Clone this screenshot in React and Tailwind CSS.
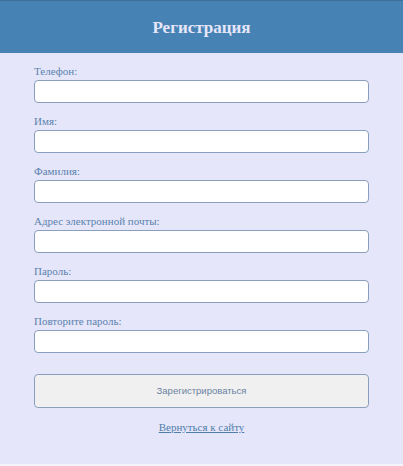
export default function App() {
  const fields = [
    "Телефон:",
    "Имя:",
    "Фамилия:",
    "Адрес электронной почты:",
    "Пароль:",
    "Повторите пароль:",
  ];
  return (
    <div className="w-[403px] h-[466px] bg-[#f4f4fb]" style={{ fontFamily: '"Liberation Serif", serif' }}>
      <div className="h-[464px] bg-[#e6e6fa] flex flex-col">
        <div className="h-px bg-[#3f6f98]" />
        <div className="h-[52px] bg-[#4682b4] flex items-center justify-center">
          <h1 className="text-[17px] font-bold text-[#e6e6fa] leading-none mt-[1px]">Регистрация</h1>
        </div>
        <div className="px-[34px] pt-[11px] flex flex-col">
          {fields.map((f, i) => (
            <div key={i} className="flex flex-col mb-[11px]">
              <label className="text-[11px] leading-[14px] text-[#5b82ad] mb-[2px]">{f}</label>
              <input className="h-[23px] w-full bg-white border border-[#8a9fbd] rounded-[4px] outline-none" />
            </div>
          ))}
          <button className="mt-[10px] h-[34px] w-full bg-[#f0f0f0] border border-[#8a9fbd] rounded-[4px] text-[9.5px] text-[#6a82a0]" style={{ fontFamily: '"Liberation Sans", Arial, sans-serif' }}>
            Зарегистрироваться
          </button>
          <div className="mt-[11px] text-center leading-[14px]">
            <a href="#" className="text-[11px] text-[#4f7eab] underline">Вернуться к сайту</a>
          </div>
        </div>
      </div>
    </div>
  );
}
